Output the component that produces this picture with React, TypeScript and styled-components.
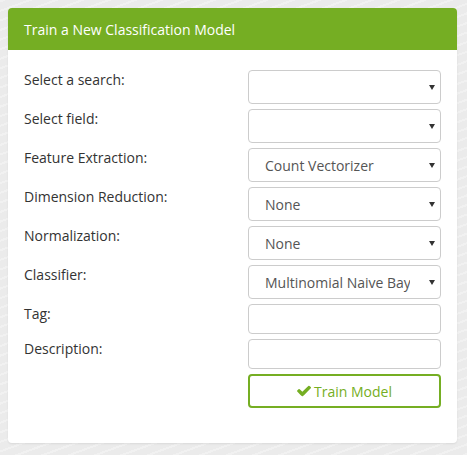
import React, { useState } from "react";
import styled, { createGlobalStyle } from "styled-components";

const GlobalStyle = createGlobalStyle`
  html, body {
    margin: 0;
    padding: 0;
  }
  body {
    background-color: #ebebeb;
    background-image: repeating-linear-gradient(
      -20deg,
      rgba(255, 255, 255, 0.3) 0px,
      rgba(255, 255, 255, 0.3) 2px,
      transparent 2px,
      transparent 9px
    );
    font-family: "Open Sans", "Liberation Sans", sans-serif;
    min-height: 455px;
  }
`;

type SelectField = {
  label: string;
  options: string[];
  initial: string;
};

const selectFields: SelectField[] = [
  { label: "Select a search:", options: [""], initial: "" },
  { label: "Select field:", options: [""], initial: "" },
  {
    label: "Feature Extraction:",
    options: ["Count Vectorizer", "Tfidf Vectorizer", "Hashing Vectorizer"],
    initial: "Count Vectorizer",
  },
  {
    label: "Dimension Reduction:",
    options: ["None", "PCA", "Truncated SVD"],
    initial: "None",
  },
  {
    label: "Normalization:",
    options: ["None", "L1", "L2"],
    initial: "None",
  },
  {
    label: "Classifier:",
    options: ["Multinomial Naive Bayes", "Linear SVC", "Logistic Regression"],
    initial: "Multinomial Naive Bayes",
  },
];

const CheckIcon = () => (
  <svg width="14" height="12" viewBox="0 0 1550 1188" aria-hidden="true">
    <path
      fill="currentColor"
      d="M1550 232q0 40-28 68l-724 724-136 136q-28 28-68 28t-68-28l-136-136L28 662Q0 634 0 594t28-68l136-136q28-28 68-28t68 28l294 295 656-657q28-28 68-28t68 28l136 136q28 28 28 68z"
    />
  </svg>
);

const TrainModelPanel = () => {
  const [values, setValues] = useState<string[]>(
    selectFields.map((f) => f.initial)
  );
  const [tag, setTag] = useState("");
  const [description, setDescription] = useState("");

  const onSelectChange = (index: number) => (
    e: React.ChangeEvent<HTMLSelectElement>
  ) => {
    const next = [...values];
    next[index] = e.target.value;
    setValues(next);
  };

  return (
    <Page>
      <Card>
        <CardHeader>Train a New Classification Model</CardHeader>
        <CardBody>
          {selectFields.map((field, i) => (
            <Row key={field.label} $gap={5}>
              <Label>{field.label}</Label>
              <SelectWrap>
                <Select value={values[i]} onChange={onSelectChange(i)}>
                  {field.options.map((o) => (
                    <option key={o} value={o}>
                      {o}
                    </option>
                  ))}
                </Select>
              </SelectWrap>
            </Row>
          ))}
          <Row $gap={5}>
            <Label>Tag:</Label>
            <TextInput value={tag} onChange={(e) => setTag(e.target.value)} />
          </Row>
          <Row $gap={5}>
            <Label>Description:</Label>
            <TextInput
              value={description}
              onChange={(e) => setDescription(e.target.value)}
            />
          </Row>
          <Row $gap={0}>
            <span />
            <TrainButton type="button">
              <CheckIcon />
              Train Model
            </TrainButton>
          </Row>
        </CardBody>
      </Card>
    </Page>
  );
};

const Page = styled.div`
  padding: 8px;
`;

const Card = styled.div`
  width: 449px;
  background: #ffffff;
  border-radius: 4px;
  overflow: hidden;
  box-shadow: 0 1px 2px rgba(0, 0, 0, 0.08);
`;

const CardHeader = styled.div`
  height: 42px;
  display: flex;
  align-items: center;
  padding: 0 16px;
  background: #75ae23;
  color: #ffffff;
  font-size: 14px;
`;

const CardBody = styled.div`
  padding: 20px 16px 35px 16px;
  display: flex;
  flex-direction: column;
`;

const Row = styled.div<{ $gap: number }>`
  display: grid;
  grid-template-columns: 1fr 193px;
  align-items: start;
  margin-bottom: ${(p) => p.$gap}px;
`;

const Label = styled.label`
  color: #333333;
  font-size: 14px;
  line-height: 20px;
`;

const SelectWrap = styled.div`
  position: relative;
  height: 34px;

  &::after {
    content: "";
    position: absolute;
    right: 6px;
    top: 15px;
    border-left: 3px solid transparent;
    border-right: 3px solid transparent;
    border-top: 5px solid #333333;
    pointer-events: none;
  }
`;

const Select = styled.select`
  appearance: none;
  -webkit-appearance: none;
  box-sizing: border-box;
  width: 100%;
  height: 34px;
  padding: 0 30px 0 16px;
  border: 1px solid #cccccc;
  border-radius: 4px;
  background: #ffffff;
  color: #555555;
  font-family: "Open Sans", "Liberation Sans", sans-serif;
  font-size: 14px;
  outline: none;
`;

const TextInput = styled.input`
  box-sizing: border-box;
  width: 100%;
  height: 30px;
  padding: 0 10px;
  border: 1px solid #cccccc;
  border-radius: 4px;
  color: #555555;
  font-family: "Open Sans", "Liberation Sans", sans-serif;
  font-size: 14px;
  outline: none;
`;

const TrainButton = styled.button`
  box-sizing: border-box;
  height: 34px;
  width: 100%;
  display: flex;
  align-items: center;
  justify-content: center;
  gap: 3px;
  background: #ffffff;
  border: 2px solid #75ae23;
  border-radius: 4px;
  color: #75ae23;
  font-family: "Open Sans", "Liberation Sans", sans-serif;
  font-size: 14px;
  cursor: pointer;
`;

export default function App() {
  return (
    <>
      <GlobalStyle />
      <TrainModelPanel />
    </>
  );
}
